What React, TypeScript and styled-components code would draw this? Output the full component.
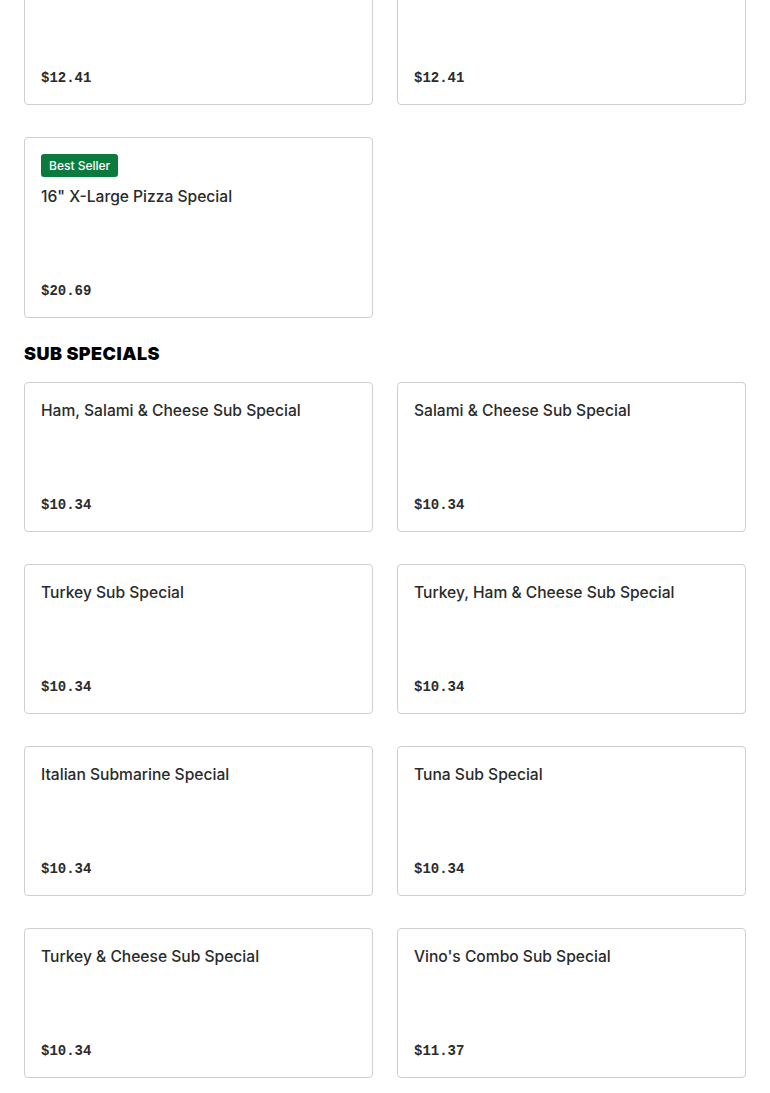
import styled, { createGlobalStyle } from "styled-components";

const GlobalStyle = createGlobalStyle`
    body {
        margin: 0;
        background: #ffffff;
        font-family: Inter, "Liberation Sans", sans-serif;
    }
`;

const Page = styled.div`
    padding: 0 24px 24px;
    margin-top: -45px;
`;

const Section = styled.section`
    & + & {
        margin-top: 24px;
    }
`;

const Heading = styled.h2`
    margin: 0 0 16px;
    font-size: 18px;
    line-height: 24px;
    font-weight: 900;
    letter-spacing: 0.45px;
    color: #000;
`;

const Grid = styled.div`
    display: grid;
    grid-template-columns: repeat(2, 1fr);
    column-gap: 24px;
    row-gap: 32px;
`;

const Card = styled.div`
    display: flex;
    flex-direction: column;
    padding: 16px;
    border: 1px solid #cfcfcf;
    border-radius: 4px;
    background: #fff;
`;

const Badge = styled.span`
    align-self: flex-start;
    height: 23px;
    padding: 0 8px;
    margin-bottom: 8px;
    display: flex;
    align-items: center;
    border-radius: 3px;
    background: #0b7a3f;
    color: #fff;
    font-size: 12px;
    font-weight: 500;
`;

const Name = styled.div`
    min-height: 96px;
    font-size: 15.6px;
    line-height: 24px;
    font-weight: 500;
    color: #2a2a2a;
`;

const Price = styled.div`
    font-family: "Liberation Mono", monospace;
    font-size: 14px;
    line-height: 20px;
    font-weight: 700;
    color: #2b2b2b;
`;

type Item = { name: string; price: string; badge?: string };

const pizza: Item[] = [
    { name: "14\" Large Pizza Special", price: "$12.41" },
    { name: "Two 12\" Medium Pizza Special", price: "$12.41" },
    { name: "16\" X-Large Pizza Special", price: "$20.69", badge: "Best Seller" },
];

const subs: Item[] = [
    { name: "Ham, Salami & Cheese Sub Special", price: "$10.34" },
    { name: "Salami & Cheese Sub Special", price: "$10.34" },
    { name: "Turkey Sub Special", price: "$10.34" },
    { name: "Turkey, Ham & Cheese Sub Special", price: "$10.34" },
    { name: "Italian Submarine Special", price: "$10.34" },
    { name: "Tuna Sub Special", price: "$10.34" },
    { name: "Turkey & Cheese Sub Special", price: "$10.34" },
    { name: "Vino's Combo Sub Special", price: "$11.37" },
];

function MenuCard({ item }: { item: Item }) {
    return (
        <Card>
            {item.badge ? <Badge>{item.badge}</Badge> : null}
            <Name>{item.name}</Name>
            <Price>{item.price}</Price>
        </Card>
    );
}

function App() {
    return (
        <>
            <GlobalStyle />
            <Page>
                <Section>
                    <Grid>
                        {pizza.map((item) => <MenuCard key={item.name} item={item} />)}
                    </Grid>
                </Section>
                <Section>
                    <Heading>SUB SPECIALS</Heading>
                    <Grid>
                        {subs.map((item) => <MenuCard key={item.name} item={item} />)}
                    </Grid>
                </Section>
            </Page>
        </>
    );
}

export default App;
